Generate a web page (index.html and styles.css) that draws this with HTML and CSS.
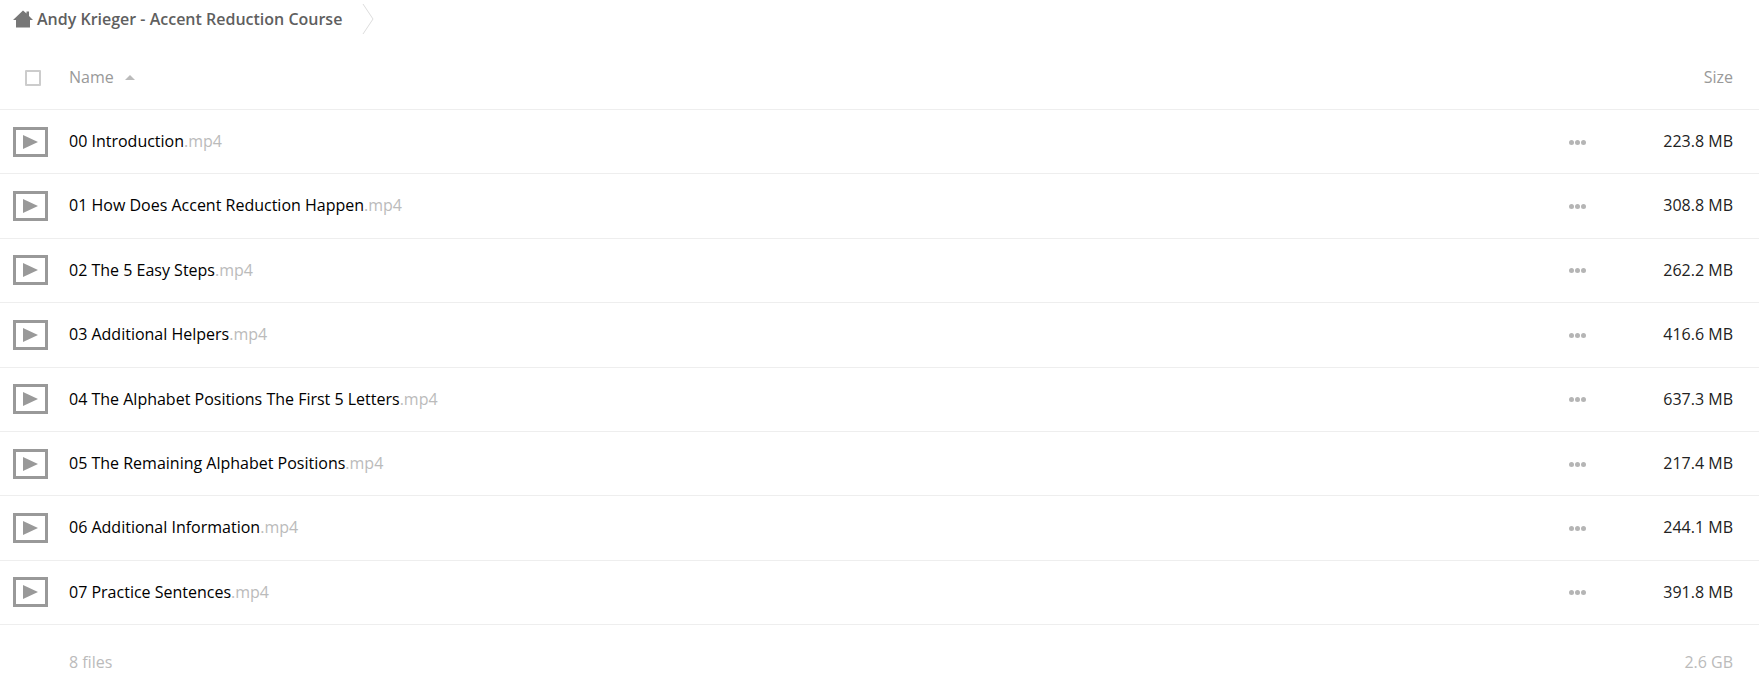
FILE: index.html
```html
<!DOCTYPE html>
<html lang="en">

<head>
    <meta charset="UTF-8">
    <title>Files</title>
    <link rel="stylesheet" href="styles.css">
</head>

<body>
    <!-- Breadcrumb -->
    <div class="crumbs">
        <svg class="home" width="20" height="18" viewBox="0 0 20 18"><path d="M10 0.5 L13.5 3.5 V1.5 H16 V6 L20 10 H17 V17.5 H3 V10 H0 Z" fill="#777"/></svg>
        <span class="crumb-name">Andy Krieger - Accent Reduction Course</span>
        <svg class="chevron" width="12" height="32" viewBox="0 0 12 32"><path d="M1 1 L11 16 L1 31" fill="none" stroke="#ddd" stroke-width="1"/></svg>
    </div>

    <!-- File list -->
    <div class="file-head">
        <div class="col-check"><span class="checkbox"></span></div>
        <div class="col-name">Name <span class="sort-arrow"></span></div>
        <div class="col-size">Size</div>
    </div>

    <div class="file-row">
        <div class="col-check"><svg class="play" width="35" height="30" viewBox="0 0 35 30"><rect x="1.5" y="1.5" width="32" height="27" fill="none" stroke="#999" stroke-width="3"/><path d="M10 8 L25 15 L10 22 Z" fill="#999"/></svg></div>
        <div class="col-name">00 Introduction<span class="ext">.mp4</span></div>
        <div class="col-more"><span class="dot"></span><span class="dot"></span><span class="dot"></span></div>
        <div class="col-size dark">223.8 MB</div>
    </div>
    <div class="file-row">
        <div class="col-check"><svg class="play" width="35" height="30" viewBox="0 0 35 30"><rect x="1.5" y="1.5" width="32" height="27" fill="none" stroke="#999" stroke-width="3"/><path d="M10 8 L25 15 L10 22 Z" fill="#999"/></svg></div>
        <div class="col-name">01 How Does Accent Reduction Happen<span class="ext">.mp4</span></div>
        <div class="col-more"><span class="dot"></span><span class="dot"></span><span class="dot"></span></div>
        <div class="col-size dark">308.8 MB</div>
    </div>
    <div class="file-row">
        <div class="col-check"><svg class="play" width="35" height="30" viewBox="0 0 35 30"><rect x="1.5" y="1.5" width="32" height="27" fill="none" stroke="#999" stroke-width="3"/><path d="M10 8 L25 15 L10 22 Z" fill="#999"/></svg></div>
        <div class="col-name">02 The 5 Easy Steps<span class="ext">.mp4</span></div>
        <div class="col-more"><span class="dot"></span><span class="dot"></span><span class="dot"></span></div>
        <div class="col-size dark">262.2 MB</div>
    </div>
    <div class="file-row">
        <div class="col-check"><svg class="play" width="35" height="30" viewBox="0 0 35 30"><rect x="1.5" y="1.5" width="32" height="27" fill="none" stroke="#999" stroke-width="3"/><path d="M10 8 L25 15 L10 22 Z" fill="#999"/></svg></div>
        <div class="col-name">03 Additional Helpers<span class="ext">.mp4</span></div>
        <div class="col-more"><span class="dot"></span><span class="dot"></span><span class="dot"></span></div>
        <div class="col-size dark">416.6 MB</div>
    </div>
    <div class="file-row">
        <div class="col-check"><svg class="play" width="35" height="30" viewBox="0 0 35 30"><rect x="1.5" y="1.5" width="32" height="27" fill="none" stroke="#999" stroke-width="3"/><path d="M10 8 L25 15 L10 22 Z" fill="#999"/></svg></div>
        <div class="col-name">04 The Alphabet Positions The First 5 Letters<span class="ext">.mp4</span></div>
        <div class="col-more"><span class="dot"></span><span class="dot"></span><span class="dot"></span></div>
        <div class="col-size dark">637.3 MB</div>
    </div>
    <div class="file-row">
        <div class="col-check"><svg class="play" width="35" height="30" viewBox="0 0 35 30"><rect x="1.5" y="1.5" width="32" height="27" fill="none" stroke="#999" stroke-width="3"/><path d="M10 8 L25 15 L10 22 Z" fill="#999"/></svg></div>
        <div class="col-name">05 The Remaining Alphabet Positions<span class="ext">.mp4</span></div>
        <div class="col-more"><span class="dot"></span><span class="dot"></span><span class="dot"></span></div>
        <div class="col-size dark">217.4 MB</div>
    </div>
    <div class="file-row">
        <div class="col-check"><svg class="play" width="35" height="30" viewBox="0 0 35 30"><rect x="1.5" y="1.5" width="32" height="27" fill="none" stroke="#999" stroke-width="3"/><path d="M10 8 L25 15 L10 22 Z" fill="#999"/></svg></div>
        <div class="col-name">06 Additional Information<span class="ext">.mp4</span></div>
        <div class="col-more"><span class="dot"></span><span class="dot"></span><span class="dot"></span></div>
        <div class="col-size dark">244.1 MB</div>
    </div>
    <div class="file-row">
        <div class="col-check"><svg class="play" width="35" height="30" viewBox="0 0 35 30"><rect x="1.5" y="1.5" width="32" height="27" fill="none" stroke="#999" stroke-width="3"/><path d="M10 8 L25 15 L10 22 Z" fill="#999"/></svg></div>
        <div class="col-name">07 Practice Sentences<span class="ext">.mp4</span></div>
        <div class="col-more"><span class="dot"></span><span class="dot"></span><span class="dot"></span></div>
        <div class="col-size dark">391.8 MB</div>
    </div>

    <!-- Summary -->
    <div class="file-foot">
        <div class="col-check"></div>
        <div class="col-name">8 files</div>
        <div class="col-size">2.6 GB</div>
    </div>
</body>

</html>
```

FILE: styles.css
```css
body {
    font-family: "Open Sans", sans-serif;
    font-size: 16px;
    margin: 0;
    padding: 0;
    background-color: #fff;
    color: #000;
    overflow: hidden;
}

.crumbs {
    display: flex;
    align-items: center;
    height: 38px;
    padding-left: 13px;
    color: #5f5f5f;
    font-weight: 600;
}

.home {
    margin-right: 4px;
}

.chevron {
    margin-left: 20px;
}

.file-head,
.file-row,
.file-foot {
    display: flex;
    align-items: center;
}

.file-head {
    height: 72px;
    padding-top: 9px;
    box-sizing: border-box;
    border-bottom: 1px solid #eee;
    color: #999;
}

.file-row {
    height: 63.4px;
    border-bottom: 1px solid #eee;
}

.file-foot {
    height: 76px;
    color: #bbb;
}

.col-check {
    width: 69px;
    padding-left: 13px;
    box-sizing: border-box;
    display: flex;
    flex-shrink: 0;
}

.file-head .col-check {
    padding-left: 25px;
}

.col-name {
    flex: 1;
    margin-bottom: 1.4px;
}

.col-more {
    display: flex;
    gap: 1px;
    margin-top: 1px;
    margin-right: 47px;
}

.col-size {
    width: 100px;
    margin-bottom: 1.4px;
    padding-right: 26px;
    text-align: right;
}

.checkbox {
    display: block;
    width: 12px;
    height: 12px;
    border: 2px solid #ccc;
    border-radius: 1px;
}

.sort-arrow {
    display: inline-block;
    width: 0;
    height: 0;
    margin-left: 7px;
    vertical-align: 3px;
    border-left: 5px solid transparent;
    border-right: 5px solid transparent;
    border-bottom: 5px solid #bbb;
}

.ext {
    color: #bbb;
}

.dark {
    color: #222;
}

.dot {
    display: block;
    width: 5px;
    height: 5px;
    border-radius: 50%;
    background-color: #b5b5b5;
}
```
